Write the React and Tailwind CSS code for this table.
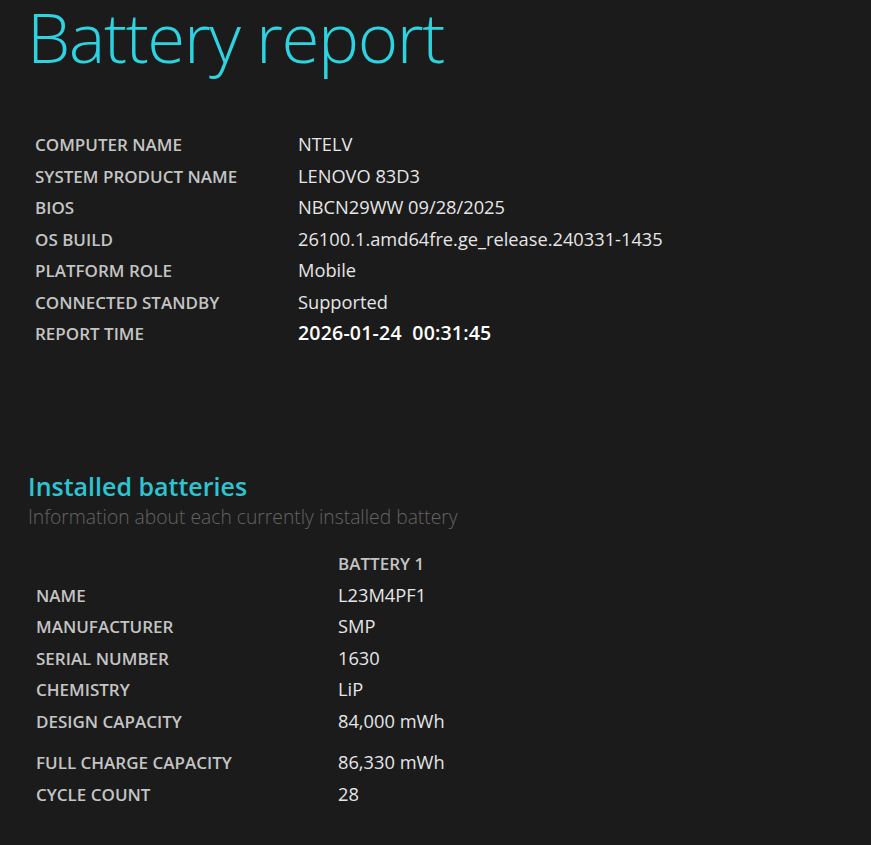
import React from 'react';

const systemInfo = [
  ['COMPUTER NAME', 'NTELV'],
  ['SYSTEM PRODUCT NAME', 'LENOVO 83D3'],
  ['BIOS', 'NBCN29WW 09/28/2025'],
  ['OS BUILD', '26100.1.amd64fre.ge_release.240331-1435'],
  ['PLATFORM ROLE', 'Mobile'],
  ['CONNECTED STANDBY', 'Supported'],
];

const batteryInfo = [
  ['NAME', 'L23M4PF1'],
  ['MANUFACTURER', 'SMP'],
  ['SERIAL NUMBER', '1630'],
  ['CHEMISTRY', 'LiP'],
  ['DESIGN CAPACITY', '84,000 mWh'],
];

const Row = ({ label, value, valueCls = 'text-[18.25px] font-normal text-[#e6e6e6]', labelW = 'w-[263px]' }) => (
  <div className="flex items-baseline h-[31.5px] leading-[31.5px]">
    <div className={`${labelW} shrink-0 text-[17px] font-semibold text-[#c4c4c4]`}>{label}</div>
    <div className={valueCls}>{value}</div>
  </div>
);

export default function App() {
  return (
    <div
      className="min-h-screen w-full bg-[#1b1b1b] overflow-hidden"
      style={{ fontFamily: '"Open Sans", "Noto Sans", sans-serif' }}
    >
      {/* Title */}
      <h1 className="pl-[27px] pt-[6px] text-[69px] font-light leading-[60px] text-[#2cd3e1] tracking-[-1.4px]">
        Battery report
      </h1>

      {/* System info */}
      <div className="pl-[35px] pt-[62px]">
        {systemInfo.map(([l, v]) => (
          <Row key={l} label={l} value={v} />
        ))}
        <Row
          label="REPORT TIME"
          value={<span>2026-01-24&nbsp;&nbsp;00:31:45</span>}
          valueCls="text-[19.5px] font-semibold text-white tracking-[0.2px]"
        />
      </div>

      {/* Installed batteries */}
      <div className="pl-[28px] pt-[121px]">
        <h2 className="text-[25px] font-semibold leading-[32px] text-[#2cc5d3]">Installed batteries</h2>
        <p className="mt-[3px] text-[19.3px] font-light leading-[24px] text-[#636363]">
          Information about each currently installed battery
        </p>
      </div>

      <div className="pl-[36px] pt-[19px]">
        <div className="flex items-baseline h-[31px] leading-[31px]">
          <div className="w-[302px] shrink-0" />
          <div className="text-[17px] font-semibold text-[#c4c4c4]">BATTERY 1</div>
        </div>
        {batteryInfo.map(([l, v]) => (
          <Row key={l} label={l} value={v} labelW="w-[302px]" />
        ))}
        <div className="h-[10px]" />
        <Row label="FULL CHARGE CAPACITY" value="86,330 mWh" labelW="w-[302px]" />
        <Row label="CYCLE COUNT" value="28" labelW="w-[302px]" />
      </div>
    </div>
  );
}
